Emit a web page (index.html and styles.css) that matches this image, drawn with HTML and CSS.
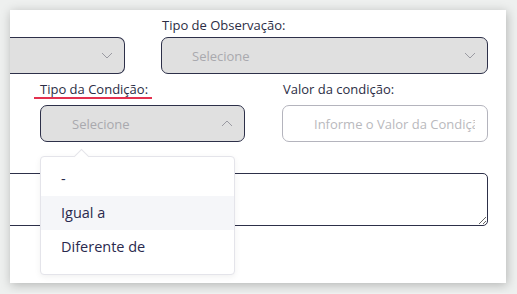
FILE: index.html
```html
<!DOCTYPE html>
<html lang="pt-BR">
  <head>
    <meta charset="UTF-8" />
    <meta name="viewport" content="width=device-width, initial-scale=1.0" />
    <title>Condição</title>
    <link rel="stylesheet" href="styles.css">
  </head>
  <body>
    <div class="card">
      <div class="row row-top">
        <div class="field field-cut">
          <div class="select">
            <span class="select-text"></span>
            <svg class="chevron" width="12" height="7" viewBox="0 0 12 7"><path d="M1 1l5 5 5-5" fill="none" stroke="#9a9aa2" stroke-width="1"/></svg>
          </div>
        </div>
        <div class="field">
          <label class="label">Tipo de Observação:</label>
          <div class="select">
            <span class="select-text">Selecione</span>
            <svg class="chevron" width="12" height="7" viewBox="0 0 12 7"><path d="M1 1l5 5 5-5" fill="none" stroke="#9a9aa2" stroke-width="1"/></svg>
          </div>
        </div>
      </div>

      <div class="row row-mid">
        <div class="field field-open">
          <label class="label"><span class="marked">Tipo da Condição:</span></label>
          <div class="select select-open">
            <span class="select-text">Selecione</span>
            <svg class="chevron" width="12" height="7" viewBox="0 0 12 7"><path d="M1 6l5-5 5 5" fill="none" stroke="#9a9aa2" stroke-width="1"/></svg>
          </div>
          <ul class="dropdown">
            <li class="option">-</li>
            <li class="option active">Igual a</li>
            <li class="option">Diferente de</li>
          </ul>
        </div>
        <div class="field">
          <label class="label">Valor da condição:</label>
          <input class="input" type="text" placeholder="Informe o Valor da Condição">
        </div>
      </div>

      <div class="row row-bottom">
        <textarea class="textarea"></textarea>
      </div>
    </div>
  </body>
</html>
```

FILE: styles.css
```css
* {
  margin: 0;
  padding: 0;
  box-sizing: border-box;
}

body {
  background-color: #eef0ef;
  padding: 10px;
  font-family: "Open Sans", sans-serif;
  color: #2b2d45;
}

.card {
  width: 496px;
  height: 273px;
  background-color: #fff;
  box-shadow: 1px 2px 10px rgba(0, 0, 0, 0.25);
  overflow: hidden;
  padding: 6px 18px 0 0;
}

.row {
  display: grid;
}

.row-top {
  grid-template-columns: 115px 1fr;
  gap: 36px;
  align-items: end;
}

.row-mid {
  grid-template-columns: 205px 206px;
  gap: 37px;
  padding-left: 30px;
  margin-top: 7px;
}

.row-bottom {
  margin-top: 31px;
  margin-left: -20px;
}

.field {
  position: relative;
  display: flex;
  flex-direction: column;
}

.label {
  font-size: 13px;
  line-height: 18px;
  height: 18px;
  margin-bottom: 3px;
  padding-left: 1px;
}

.row-mid .label {
  line-height: 16px;
  margin-bottom: 6px;
}

.marked {
  display: inline-block;
  border-bottom: 2px solid #e3314f;
  margin-left: -7px;
  padding: 0 4px 0 6px;
}

.select {
  height: 37px;
  border: 1px solid #2d3049;
  border-radius: 7px;
  background-color: #e0e0e0;
  display: flex;
  align-items: center;
  justify-content: space-between;
  padding: 0 11px 0 30px;
}

.field-cut .select {
  border-left: none;
  border-radius: 0 7px 7px 0;
}

.select-open {
  padding-left: 31px;
}

.select-text {
  font-size: 13px;
  color: #a9a9ae;
}

.chevron {
  flex-shrink: 0;
}

.input {
  height: 37px;
  border: 1px solid #b4b4bd;
  border-radius: 7px;
  padding: 0 12px 0 31px;
  font-family: "Open Sans", sans-serif;
  font-size: 13px;
  outline: none;
}

.input::placeholder {
  color: #b9b9bd;
}

.textarea {
  display: block;
  width: 100%;
  height: 53px;
  border: 1px solid #2d3049;
  border-radius: 5px;
  resize: vertical;
  font-family: "Open Sans", sans-serif;
}

.dropdown {
  position: absolute;
  top: 75px;
  left: 0;
  width: 195px;
  list-style: none;
  background-color: #fff;
  border: 1px solid #e4e4ea;
  border-radius: 4px;
  box-shadow: 0 2px 6px rgba(0, 0, 0, 0.06);
  padding: 5px 0 10px;
  z-index: 2;
}

.dropdown::before {
  content: "";
  position: absolute;
  top: -6px;
  left: 35px;
  width: 10px;
  height: 10px;
  background-color: #fff;
  border-left: 1px solid #e4e4ea;
  border-top: 1px solid #e4e4ea;
  transform: rotate(45deg);
}

.option {
  height: 34px;
  line-height: 34px;
  padding-left: 20px;
  font-size: 14.5px;
  color: #2a2a4e;
}

.option.active {
  background-color: #f5f6f9;
}
```
